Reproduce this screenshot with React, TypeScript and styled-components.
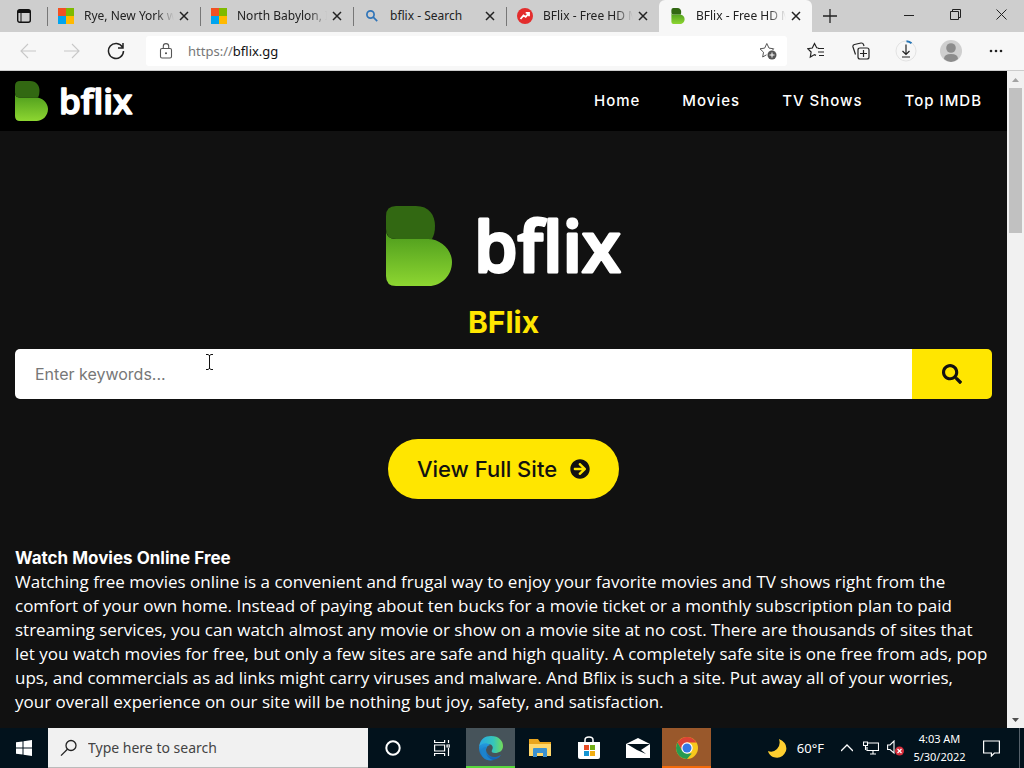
import React from "react";
import styled, { createGlobalStyle } from "styled-components";
import { FaArrowCircleRight, FaSearch } from "react-icons/fa";

const SYSTEM = `"Noto Sans", "Open Sans", sans-serif`;
const SITE = `Inter, "Open Sans", sans-serif`;

const Global = createGlobalStyle`
  * { box-sizing: border-box; }
  body { margin: 0; background: #111; }
  button { border: 0; padding: 0; background: none; color: inherit; font: inherit; }
  svg { display: block; flex: none; }
`;

const Screen = styled.div`
  height: 100vh;
  display: grid;
  grid-template-rows: 32px 39px minmax(0, 1fr) 40px;
  font-family: ${SYSTEM};
  overflow: hidden;
`;

/* Browser chrome */
const TabStrip = styled.div`
  display: flex;
  background: #cecece;
  color: #222;
`;
const TabMenu = styled.button`
  width: 47px;
  display: grid;
  place-items: center;
`;
const Tab = styled.div<{ $active?: boolean }>`
  flex: 0 1 153px;
  min-width: 0;
  display: flex;
  align-items: center;
  gap: 10px;
  padding: 0 6px 0 11px;
  background: ${(p) => (p.$active ? "#f7f7f7" : "transparent")};
  border-radius: ${(p) => (p.$active ? "6px 6px 0 0" : "0")};
  position: relative;
  &::before {
    content: "";
    position: absolute;
    left: 0;
    top: 7px;
    height: 19px;
    width: ${(p) => (p.$active ? "0" : "1px")};
    background: #777;
  }
`;
const TabTitle = styled.button<{ $fade?: boolean }>`
  flex: 1;
  min-width: 0;
  white-space: nowrap;
  text-align: left;
  font-size: 12px;
  line-height: 20px;
  mask-image: ${(p) => (p.$fade ? "linear-gradient(90deg, #000 80%, transparent)" : "none")};
`;
const TabClose = styled.button`
  width: 20px;
  height: 20px;
  display: grid;
  place-items: center;
  margin-left: -10px;
`;
const NewTab = styled.button`
  width: 36px;
  display: grid;
  place-items: center;
`;
const WindowButtons = styled.div`
  margin-left: auto;
  display: flex;
`;
const WindowButton = styled.button`
  width: 46px;
  height: 29px;
  display: grid;
  place-items: center;
`;
const Toolbar = styled.div`
  display: flex;
  align-items: center;
  padding: 0 6px;
  background: #f7f7f7;
  border-bottom: 1px solid #ccc;
`;
const ToolButton = styled.button<{ $dim?: boolean }>`
  width: 44px;
  height: 32px;
  display: grid;
  place-items: center;
  color: ${(p) => (p.$dim ? "#c8c8c8" : "#222")};
`;
const ActionButton = styled(ToolButton)`
  width: 45px;
`;
const AddressBar = styled.div`
  flex: 1;
  height: 30px;
  display: flex;
  align-items: center;
  gap: 14px;
  margin: 0 6px 0 8px;
  padding: 0 10px 0 12px;
  background: #fff;
  border-radius: 3px;
`;
const Address = styled.button`
  flex: 1;
  text-align: left;
  font-size: 13px;
  line-height: 20px;
  color: #111;
`;
const Muted = styled.span`
  color: #777;
`;

/* Web page */
const Viewport = styled.div`
  display: grid;
  grid-template-columns: minmax(0, 1fr) 17px;
  min-height: 0;
`;
const Page = styled.div`
  background: #111;
  color: #fff;
  font-family: ${SITE};
  overflow: hidden;
`;
const Header = styled.header`
  height: 60px;
  display: flex;
  align-items: center;
  justify-content: space-between;
  padding: 0 25px 0 15px;
  background: #000;
`;
const LogoArt = styled.svg`
  overflow: visible;
`;
const LogoText = styled.text`
  fill: #fff;
  stroke: #fff;
  stroke-width: 3px;
  stroke-linejoin: round;
  font-family: "Open Sans", sans-serif;
  font-size: 70px;
  font-weight: 600;
  font-variant-ligatures: none;
`;
const Nav = styled.nav`
  display: flex;
  gap: 42px;
`;
const NavLink = styled.a`
  color: #fff;
  text-decoration: none;
  font-size: 15px;
  font-weight: 500;
  line-height: 20px;
  letter-spacing: 1px;
`;
const Main = styled.main`
  display: flex;
  flex-direction: column;
  align-items: center;
  padding: 75px 15px 0;
`;
const Title = styled.h1`
  margin: 18px 0 9px;
  color: #ffe600;
  font-size: 30px;
  line-height: 36px;
  font-weight: 700;
`;
const SearchForm = styled.form`
  width: 100%;
  height: 50px;
  display: flex;
  border-radius: 5px;
  overflow: hidden;
`;
const Keywords = styled.input`
  flex: 1;
  min-width: 0;
  border: 0;
  padding: 0 20px;
  background: #fff;
  font: 16px ${SITE};
  &::placeholder { color: #777; opacity: 1; }
`;
const SearchButton = styled.button`
  width: 80px;
  display: grid;
  place-items: center;
  background: #ffe600;
  color: #111;
`;
const FullSite = styled.a`
  height: 60px;
  display: flex;
  align-items: center;
  gap: 13px;
  margin: 40px 0 47px;
  padding: 0 29px;
  border-radius: 30px;
  background: #ffe600;
  color: #111;
  text-decoration: none;
  font-size: 22px;
  font-weight: 500;
  white-space: nowrap;
`;
const Article = styled.section`
  width: 100%;
  line-height: 24px;
`;
const ArticleTitle = styled.h2`
  margin: 0;
  font-size: 17px;
  line-height: 24px;
  font-weight: 700;
`;
const Paragraph = styled.p`
  margin: 0;
  font-family: "Open Sans", sans-serif;
  font-size: 17px;
  white-space: nowrap;
`;
const ScrollTrack = styled.div`
  display: flex;
  flex-direction: column;
  align-items: center;
  background: #f1f1f1;
`;
const ScrollArrow = styled.button<{ $down?: boolean }>`
  width: 17px;
  height: 17px;
  display: grid;
  place-items: center;
  margin-top: ${(p) => (p.$down ? "auto" : "0")};
  color: ${(p) => (p.$down ? "#505050" : "#a3a3a3")};
`;
const ScrollThumb = styled.div`
  width: 13px;
  height: 145px;
  background: #c1c1c1;
`;
const Pointer = styled.svg`
  position: absolute;
  left: 205px;
  top: 353px;
`;

/* Taskbar */
const Taskbar = styled.footer`
  display: flex;
  background: #02121c;
  color: #fff;
`;
const TaskButton = styled.button<{ $tint?: string; $line?: string }>`
  width: 49px;
  height: 40px;
  display: grid;
  place-items: center;
  background: ${(p) => p.$tint ?? "transparent"};
  box-shadow: ${(p) => (p.$line ? `inset 0 -2px ${p.$line}` : "none")};
`;
const StartButton = styled(TaskButton)`
  width: 48px;
`;
const TaskSearch = styled.label`
  flex: 0 1 320px;
  min-width: 0;
  display: flex;
  align-items: center;
  gap: 10px;
  padding: 0 12px;
  background: #f1f1f1;
  border-bottom: 1px solid #bbb;
  color: #222;
`;
const TaskInput = styled.input`
  flex: 1;
  min-width: 0;
  border: 0;
  padding: 0;
  background: none;
  font: 14px ${SYSTEM};
  &::placeholder { color: #444; opacity: 1; }
`;
const Tray = styled.div`
  margin-left: auto;
  display: flex;
  align-items: center;
  border-right: 1px solid #56616a;
  margin-right: 4px;
`;
const Weather = styled.button`
  display: flex;
  align-items: center;
  gap: 10px;
  margin-right: 11px;
  font-size: 13px;
`;
const TrayButton = styled.button`
  width: 24px;
  height: 40px;
  display: grid;
  place-items: center;
`;
const Clock = styled.button`
  width: 65px;
  font-size: 11px;
  line-height: 18px;
  text-align: center;
  white-space: nowrap;
`;
const Notice = styled(TrayButton)`
  width: 47px;
  padding-right: 9px;
`;

const Line = ({ d, size = 16, width = 1.3 }: { d: string; size?: number; width?: number }) => (
  <svg width={size} height={size} viewBox={`0 0 ${size} ${size}`} fill="none" stroke="currentColor" strokeWidth={width}>
    <path d={d} />
  </svg>
);

const Mark = ({ id }: { id: string }) => (
  <>
    <defs>
      <linearGradient id={id} x1="0" y1="0" x2="0" y2="1">
        <stop offset="0" stopColor="#4b9a1c" />
        <stop offset="1" stopColor="#8dd631" />
      </linearGradient>
    </defs>
    <path d="M0 24C0 30 4 33 10 33H42C55 33 66 44 66 56C66 70 55 80 43 80H10Q0 80 0 70Z" fill={`url(#${id})`} />
    <path d="M10 0H30C43 0 49 9 49 20Q49 28 46 33H10Q0 33 0 23V10Q0 0 10 0Z" fill="#326812" />
  </>
);

const Logo = ({ width, height, id }: { width: number; height: number; id: string }) => (
  <LogoArt width={width} height={height} viewBox="0 0 236 80" role="img" aria-label="bflix">
    <Mark id={id} />
    <LogoText x="88" y="66">bflix</LogoText>
  </LogoArt>
);

const MicrosoftIcon = () => (
  <svg width="16" height="16" viewBox="0 0 16 16">
    <path fill="#f25022" d="M0 0h8v8H0z" />
    <path fill="#7fba00" d="M8 0h8v8H8z" />
    <path fill="#00a4ef" d="M0 8h8v8H0z" />
    <path fill="#ffb900" d="M8 8h8v8H8z" />
  </svg>
);
const LensIcon = () => (
  <svg width="16" height="16" viewBox="0 0 16 16" fill="none" stroke="#2f74b8" strokeWidth="1.7">
    <circle cx="6.5" cy="6.5" r="3.6" />
    <path d="m9.2 9.2 4 4" />
  </svg>
);
const TrendIcon = () => (
  <svg width="16" height="16" viewBox="0 0 16 16">
    <circle cx="8" cy="8" r="8" fill="#e32d2d" />
    <path d="m3.5 11 3-3.5 2.2 1.4 3-3.6M8.7 4.8h3.3v3.4" fill="none" stroke="#fff" strokeWidth="1.8" />
  </svg>
);
const BflixIcon = () => (
  <svg width="16" height="16" viewBox="-7 0 80 80">
    <Mark id="tab-mark" />
  </svg>
);

const EdgeIcon = () => (
  <svg width="26" height="26" viewBox="0 0 26 26">
    <defs>
      <linearGradient id="edge-a" x1="0" x2="1">
        <stop stopColor="#29a7e5" />
        <stop offset=".6" stopColor="#35c5bb" />
        <stop offset="1" stopColor="#73dc58" />
      </linearGradient>
      <linearGradient id="edge-b" x1="0" y1="0" x2="0" y2="1">
        <stop stopColor="#249bdd" />
        <stop offset="1" stopColor="#1260b4" />
      </linearGradient>
    </defs>
    <path d="M1 12C2 4 7 1 13 1c8 0 12 5 12 10 0 5-4 7-8 7-3 0-4-1-3-3 2-3 0-6-4-6-5 0-8 2-9 3Z" fill="url(#edge-a)" />
    <path d="M1 12C3 8 9 7 12 10c-4 1-5 5-3 8 3 5 9 5 14 2-3 5-11 7-17 3C2 20 1 16 1 12Z" fill="url(#edge-b)" />
    <path d="M9 12c-3 5 0 12 7 13-8 2-13-3-13-8 0-3 3-5 6-5Z" fill="#1c83cc" />
  </svg>
);
const FolderIcon = () => (
  <svg width="22" height="20" viewBox="0 0 22 20">
    <path d="M0 1h9l2 3h11v14H0z" fill="#e9a51e" />
    <path d="M0 6h22v12H0z" fill="#ffd76b" />
    <path d="M4 19v-8q0-1 1-1h12q1 0 1 1v8h-4v-4H8v4z" fill="#3b91d0" />
  </svg>
);
const StoreIcon = () => (
  <svg width="24" height="24" viewBox="0 0 24 24">
    <path d="M8 8V4q0-3 4-3t4 3v4" fill="none" stroke="#fff" strokeWidth="1.5" />
    <path d="M1 6h22v15q0 2-2 2H3q-2 0-2-2z" fill="#fff" />
    <path d="M7 9h5v5H7z" fill="#e94c25" />
    <path d="M13 9h5v5h-5z" fill="#72ad16" />
    <path d="M7 15h5v5H7z" fill="#1495d3" />
    <path d="M13 15h5v5h-5z" fill="#f2ae13" />
  </svg>
);
const MailIcon = () => (
  <svg width="26" height="22" viewBox="0 0 26 22">
    <path d="M1 7 13 1l12 6v14H1z" fill="#fff" />
    <path d="M2 7h23l-9 6 5 4-9-4z" fill="#02121c" />
  </svg>
);
const ChromeIcon = () => (
  <svg width="24" height="24" viewBox="0 0 24 24">
    <circle cx="12" cy="12" r="11" fill="#f8c81c" />
    <path d="M2.5 6.5A11 11 0 0 1 21.5 6.5H12L7.2 14.8Z" fill="#dc4236" />
    <path d="M2.5 6.5 7.2 14.8 12 17.5h4.8L12 23A11 11 0 0 1 2.5 6.5Z" fill="#279a50" />
    <circle cx="12" cy="12" r="5.7" fill="#fff" />
    <circle cx="12" cy="12" r="4.5" fill="#3478e5" />
  </svg>
);

const tabs = [
  { title: "Rye, New York w", icon: <MicrosoftIcon />, fade: true },
  { title: "North Babylon, I", icon: <MicrosoftIcon />, fade: true },
  { title: "bflix - Search", icon: <LensIcon /> },
  { title: "BFlix - Free HD M", icon: <TrendIcon />, fade: true },
  { title: "BFlix - Free HD M", icon: <BflixIcon />, fade: true, active: true },
];

const lines = [
  "Watching free movies online is a convenient and frugal way to enjoy your favorite movies and TV shows right from the",
  "comfort of your own home. Instead of paying about ten bucks for a movie ticket or a monthly subscription plan to paid",
  "streaming services, you can watch almost any movie or show on a movie site at no cost. There are thousands of sites that",
  "let you watch movies for free, but only a few sites are safe and high quality. A completely safe site is one free from ads, pop",
  "ups, and commercials as ad links might carry viruses and malware. And Bflix is such a site. Put away all of your worries,",
  "your overall experience on our site will be nothing but joy, safety, and satisfaction.",
];

export default function App() {
  return (
    <Screen>
      <Global />
      <TabStrip>
        <TabMenu aria-label="Tab actions">
          <svg width="14" height="14" viewBox="0 0 14 14">
            <rect x=".7" y=".7" width="12.6" height="12.6" rx="2" fill="none" stroke="#111" strokeWidth="1.4" />
            <path d="M1 1h12v3H1z" fill="#111" />
            <path d="M4 4v9" stroke="#111" />
          </svg>
        </TabMenu>
        {tabs.map((tab, i) => (
          <Tab key={i} $active={tab.active}>
            {tab.icon}
            <TabTitle $fade={tab.fade}>{tab.title}</TabTitle>
            <TabClose aria-label="Close tab">
              <Line size={10} width={1.5} d="m1 1 8 8M9 1 1 9" />
            </TabClose>
          </Tab>
        ))}
        <NewTab aria-label="New tab">
          <Line size={14} d="M7 0v14M0 7h14" />
        </NewTab>
        <WindowButtons>
          <WindowButton aria-label="Minimize">
            <Line size={10} width={1} d="M0 5.5h10" />
          </WindowButton>
          <WindowButton aria-label="Restore">
            <Line size={11} width={1} d="M.5 2.5h8v8h-8zM2.5 2.5v-2h8v8h-2" />
          </WindowButton>
          <WindowButton aria-label="Close window">
            <Line size={11} width={1} d="m.5.5 10 10M10.5.5l-10 10" />
          </WindowButton>
        </WindowButtons>
      </TabStrip>

      <Toolbar>
        <ToolButton $dim aria-label="Back">
          <Line d="M16 8H1M8 1 1 8l7 7" width={1.1} />
        </ToolButton>
        <ToolButton $dim aria-label="Forward">
          <Line d="M0 8h15M8 1l7 7-7 7" width={1.1} />
        </ToolButton>
        <ToolButton aria-label="Refresh">
          <Line size={18} width={1.5} d="M15.5 5.2A7.5 7.5 0 1 0 16.5 9M16 1v5h-5" />
        </ToolButton>
        <AddressBar>
          <svg width="16" height="16" viewBox="0 0 16 16" fill="none" stroke="#555" strokeWidth="1.1">
            <rect x="2.5" y="5.5" width="11" height="9.5" rx="1.5" />
            <path d="M5.3 5.5V3.3a2.7 2.7 0 0 1 5.4 0v2.2" />
            <circle cx="8" cy="10.2" r=".5" fill="#555" />
          </svg>
          <Address>
            <Muted>https://</Muted>bflix.gg
          </Address>
          <svg width="18" height="18" viewBox="0 0 18 18" fill="none" stroke="#555">
            <path d="M7.5 12.8 3.7 15l.8-4.8L1 6.8l4.7-.7L7.800 1.500l2.200 4.600 4.700.7-1.500 1.500" />
            <circle cx="13" cy="13" r="4.5" fill="#555" stroke="none" />
            <path d="M10.5 13h5M13 10.5v5" stroke="#fff" />
          </svg>
        </AddressBar>
        <ActionButton aria-label="Favorites">
          <Line size={18} width={1.2} d="M11.5 6 9.7 5.8 7.5 1.5 5.3 6l-4.5.7 3.3 3.3-.8 5 4.2-2.4 1.5.8M11 6.5h6M11 10h6M12 13.5h5" />
        </ActionButton>
        <ActionButton aria-label="Collections">
          <Line size={18} width={1.2} d="M8 6h7q2 0 2 2v7q0 2-2 2H8q-2 0-2-2V8q0-2 2-2M11.5 8v7M8 11.5h7M3.5 12.5 1 5q-.5-2 1.5-2.5L9 1q2-.2 2.5 1.5L12 4" />
        </ActionButton>
        <ActionButton aria-label="Downloads">
          <svg width="22" height="22" viewBox="0 0 22 22" fill="none">
            <circle cx="11" cy="11" r="10" stroke="#e3e3e3" />
            <path d="M11.5 1.2q3 .2 5 2" stroke="#2474b5" strokeWidth="2" />
            <path d="M11 4.5v10M7.5 11l3.5 3.5 3.5-3.5M7 17h8" stroke="#222" strokeWidth="1.2" />
          </svg>
        </ActionButton>
        <ActionButton aria-label="Profile">
          <svg width="22" height="22" viewBox="0 0 22 22">
            <circle cx="11" cy="11" r="11" fill="#cfcfcf" />
            <circle cx="11" cy="8" r="4.8" fill="#8c8c8c" />
            <path d="M4 19q0-5 7-5t7 5q-7 6-14 0" fill="#8c8c8c" />
          </svg>
        </ActionButton>
        <ActionButton aria-label="Settings and more">
          <svg width="14" height="4" viewBox="0 0 14 4" fill="#222">
            <circle cx="2" cy="2" r="1.3" />
            <circle cx="7" cy="2" r="1.3" />
            <circle cx="12" cy="2" r="1.3" />
          </svg>
        </ActionButton>
      </Toolbar>

      <Viewport>
        <Page>
          <Header>
            <Logo width={118} height={40} id="header-mark" />
            <Nav>
              {["Home", "Movies", "TV Shows", "Top IMDB"].map((name) => (
                <NavLink key={name} href="#">{name}</NavLink>
              ))}
            </Nav>
          </Header>
          <Main>
            <Logo width={236} height={80} id="hero-mark" />
            <Title>BFlix</Title>
            <SearchForm onSubmit={(e) => e.preventDefault()}>
              <Keywords aria-label="Keywords" placeholder="Enter keywords..." />
              <SearchButton aria-label="Search">
                <FaSearch size={20} />
              </SearchButton>
            </SearchForm>
            <FullSite href="#">
              View Full Site
              <FaArrowCircleRight size={20} />
            </FullSite>
            <Article>
              <ArticleTitle>Watch Movies Online Free</ArticleTitle>
              <Paragraph>
                {lines.map((line) => (
                  <React.Fragment key={line}>{line}<br /></React.Fragment>
                ))}
              </Paragraph>
            </Article>
          </Main>
        </Page>
        <ScrollTrack>
          <ScrollArrow aria-label="Scroll up">
            <svg width="7" height="4" viewBox="0 0 7 4"><path d="M0 4 3.5 0 7 4z" fill="currentColor" /></svg>
          </ScrollArrow>
          <ScrollThumb />
          <ScrollArrow $down aria-label="Scroll down">
            <svg width="7" height="4" viewBox="0 0 7 4"><path d="M0 0h7L3.5 4z" fill="currentColor" /></svg>
          </ScrollArrow>
        </ScrollTrack>
      </Viewport>

      <Taskbar>
        <StartButton aria-label="Start">
          <svg width="16" height="16" viewBox="0 0 16 16" fill="#fff">
            <path d="M0 2.3 6.5 1.4v6.2H0zM7.5 1.2 16 0v7.6H7.5zM0 8.4h6.5v6.2L0 13.7zM7.5 8.4H16V16l-8.5-1.2z" />
          </svg>
        </StartButton>
        <TaskSearch>
          <svg width="18" height="18" viewBox="0 0 18 18" fill="none" stroke="#222" strokeWidth="1.3">
            <circle cx="11" cy="6.5" r="5" />
            <path d="m7.4 10.2-6.4 6.4" />
          </svg>
          <TaskInput aria-label="Type here to search" placeholder="Type here to search" />
        </TaskSearch>
        <TaskButton aria-label="Cortana">
          <svg width="16" height="16" viewBox="0 0 16 16"><circle cx="8" cy="8" r="6.7" fill="none" stroke="#fff" strokeWidth="2" /></svg>
        </TaskButton>
        <TaskButton aria-label="Task view">
          <Line size={16} width={1.2} d="M.6 0v2.5h10V0M.6 5h10v6H.6zM.6 16v-2.5h10V16M14.5 0v3M14.5 8v8M13 5h3v2h-3z" />
        </TaskButton>
        <TaskButton $tint="#46535a" $line="#58d83d" aria-label="Microsoft Edge"><EdgeIcon /></TaskButton>
        <TaskButton aria-label="File Explorer"><FolderIcon /></TaskButton>
        <TaskButton aria-label="Microsoft Store"><StoreIcon /></TaskButton>
        <TaskButton aria-label="Mail"><MailIcon /></TaskButton>
        <TaskButton $tint="#99582b" $line="#f46a0a" aria-label="Chrome"><ChromeIcon /></TaskButton>
        <Tray>
          <Weather>
            <svg width="19" height="19" viewBox="0 0 19 19">
              <path d="M11 0Q20 4 18 12 14 21 5 18 1 16 0 12q5 2 9-2 4-4 2-10Z" fill="#ffcf30" />
            </svg>
            60°F
          </Weather>
          <TrayButton aria-label="Show hidden icons"><Line size={12} d="m0 9 6-6 6 6" /></TrayButton>
          <TrayButton aria-label="Network">
            <Line size={16} width={1.1} d="M5 3h10.5v7.5H4V7M7 14h6M10 10.5V14M.5 2h4v3.5h-4zM2.5 5.5V10" />
          </TrayButton>
          <TrayButton aria-label="Volume muted">
            <svg width="17" height="16" viewBox="0 0 17 16">
              <path d="M.6 5H3l4-4v12L3 9.5H.6z" fill="none" stroke="#fff" strokeWidth="1.1" />
              <circle cx="12.5" cy="11" r="4.5" fill="#d52c3a" />
              <path d="m10.5 9 4 4m0-4-4 4" stroke="#fff" strokeWidth="1.2" />
            </svg>
          </TrayButton>
          <Clock>4:03 AM<br />5/30/2022</Clock>
          <Notice aria-label="Notifications">
            <Line size={17} width={1.2} d="M.6 1h15.8v12h-5l-3 3v-3H.6z" />
          </Notice>
        </Tray>
      </Taskbar>
      <Pointer width="9" height="18" viewBox="0 0 9 18" fill="none" stroke="#111">
        <path d="M1 1.5h2l1.5 1L6 1.5h2M4.5 2v14M1 16.5h2l1.5-1 1.5 1h2" />
      </Pointer>
    </Screen>
  );
}
